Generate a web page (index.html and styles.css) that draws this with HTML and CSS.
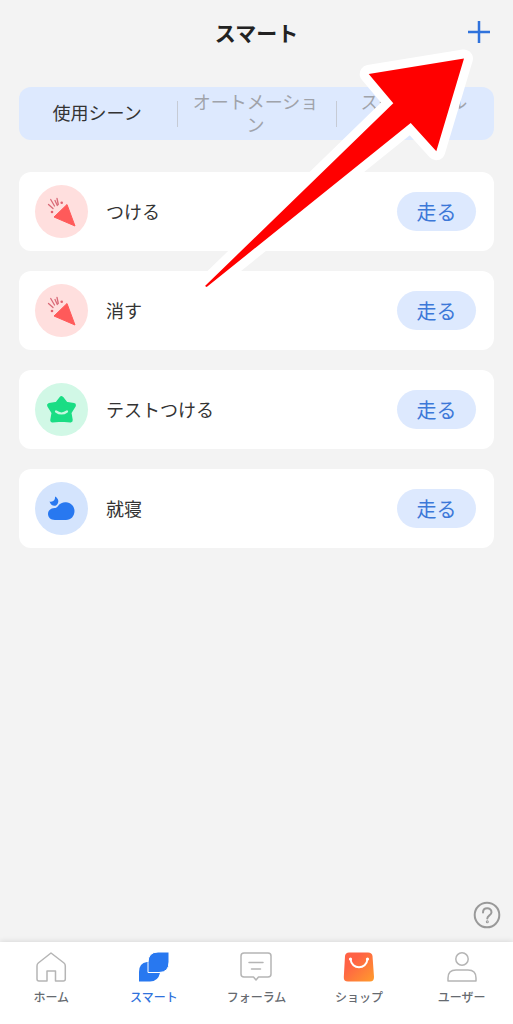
FILE: index.html
```
<!DOCTYPE html>
<html lang="ja">
<head>
<meta charset="utf-8">
<meta name="viewport" content="width=device-width, initial-scale=1">
<title>スマート</title>
<link rel="stylesheet" href="styles.css">
</head>
<body>
<svg class="defs" width="0" height="0" aria-hidden="true">
  <symbol id="party" viewBox="0 0 53 53">
    <path d="M32 19.500 40 41 19 32Z" fill="#ff5a5a" stroke="#ff5a5a" stroke-width="1" stroke-linejoin="round"/>
    <path d="M13.500 19.500 18 23.500M15.700 14.500 19.500 21M20 15.500 22.300 20.500M23.300 19.500 22 13.500" fill="none" stroke="#d96a78" stroke-width="1.300" stroke-linecap="round"/>
    <circle cx="17" cy="27" r="1.300" fill="#e2616d"/>
    <circle cx="26.700" cy="17.700" r="1.300" fill="#e2616d"/>
  </symbol>
</svg>

<header class="header">
  <h1 class="title">スマート</h1>
  <button class="add" type="button" aria-label="追加">
    <svg width="22" height="22" viewBox="0 0 22 22"><path d="M11 0V22M0 11H22" stroke="#2f72dc" stroke-width="2.500"/></svg>
  </button>
</header>

<main class="main">
  <div class="tabs">
    <button class="tab tab-active" type="button">使用シーン</button>
    <button class="tab" type="button">オートメーション</button>
    <button class="tab tab-top" type="button">スケジュール</button>
  </div>

  <ul class="scenes">
    <li class="scene">
      <span class="badge badge-red"><svg width="53" height="53"><use href="#party"/></svg></span>
      <span class="name">つける</span>
      <button class="run" type="button">走る</button>
    </li>
    <li class="scene">
      <span class="badge badge-red"><svg width="53" height="53"><use href="#party"/></svg></span>
      <span class="name">消す</span>
      <button class="run" type="button">走る</button>
    </li>
    <li class="scene">
      <span class="badge badge-green">
        <svg width="53" height="53" viewBox="0 0 53 53">
          <path d="M26.500 15.500 30.800 21 38.700 22.300 34.200 29.500 35.500 37.200 26.500 36.400 17.500 37.200 18.800 29.500 14.300 22.300 22.200 21Z" fill="#1add84" stroke="#1add84" stroke-width="4.500" stroke-linejoin="round"/>
          <path d="M21 28.500Q26.500 32.500 32 28.500" fill="none" stroke="#c5f8df" stroke-width="2.200" stroke-linecap="round"/>
        </svg>
      </span>
      <span class="name">テストつける</span>
      <button class="run" type="button">走る</button>
    </li>
    <li class="scene">
      <span class="badge badge-blue">
        <svg width="53" height="53" viewBox="0 0 53 53">
          <path d="M20 38C15.500 38 13 35 13 32C13 28.500 16 26 19.500 26C21 26 22 25.500 23 24C25 21 28.500 20 31 20.300C36 20.800 39.500 24.500 39.500 29C39.500 34 36 38 31 38Z" fill="#2878f0"/>
          <path d="M20 14.500C24 16.500 24.500 21 21 23.500C18.500 24.500 15.500 23 14.500 19.500C18 20.500 20.500 18 20 14.500Z" fill="#2878f0"/>
        </svg>
      </span>
      <span class="name">就寝</span>
      <button class="run" type="button">走る</button>
    </li>
  </ul>

  <button class="help" type="button" aria-label="ヘルプ">
    <svg width="28" height="28" viewBox="0 0 28 28" fill="none" stroke="#999" stroke-width="2" stroke-linecap="round">
      <circle cx="14" cy="14" r="12.300"/>
      <path d="M10 11.500C10 6 18.500 6 18.500 11.200C18.500 14.500 14.300 14.300 14.300 17.500"/>
      <circle cx="14.300" cy="20.800" r=".5"/>
    </svg>
  </button>
</main>

<nav class="nav">
  <a class="nav-item" href="#home">
    <svg width="32" height="32" viewBox="0 0 32 32" fill="none" stroke="#b5b5b5" stroke-width="1.500" stroke-linejoin="round"><path d="M16 2 29 12Q30.300 13 30.300 15V28Q30.300 30 28.300 30H20.500V20H12V30H4Q2 30 2 28V15Q2 13 3.300 12Z"/></svg>
    ホーム
  </a>
  <a class="nav-item nav-active" href="#smart" aria-current="page">
    <svg width="32" height="32" viewBox="0 0 32 32">
      <path d="M1 30.500V21Q1 12 9 11H15V22H22Q20 30.500 12 30.500Z" fill="#2878f0"/>
      <path d="M20 1H31V11Q31 21.500 21 21.500H10V11.500Q10 1 20 1Z" fill="#2878f0" stroke="#fff" stroke-width="1"/>
    </svg>
    スマート
  </a>
  <a class="nav-item" href="#forum">
    <svg width="32" height="32" viewBox="0 0 32 32" fill="none" stroke="#b5b5b5" stroke-width="1.500" stroke-linejoin="round" stroke-linecap="round"><path d="M4 2H28Q31 2 31 5V23Q31 26 28 26H18.500L16 29 13.500 26H4Q1 26 1 23V5Q1 2 4 2ZM9 11.500H23M11.500 18H20.500"/></svg>
    フォーラム
  </a>
  <a class="nav-item" href="#shop">
    <svg width="32" height="32" viewBox="0 0 32 32">
      <defs><linearGradient id="bag" x1="0.300" y1="0.300" x2="1" y2="1"><stop offset="0" stop-color="#ff6245"/><stop offset="1" stop-color="#ff9c2c"/></linearGradient></defs>
      <path d="M6 1.500H25Q29 1.500 29.500 5L31 26Q31 30.500 27 30.500H5Q.500 30.500 .800 26L2 5Q2.500 1.500 6 1.500Z" fill="url(#bag)"/>
      <path d="M7.500 8C8.500 19 23.500 19 24.500 8" fill="none" stroke="#fff" stroke-width="2"/>
      <circle cx="7.500" cy="8" r="1.600" fill="#fff"/><circle cx="24.500" cy="8" r="1.600" fill="#fff"/>
    </svg>
    ショップ
  </a>
  <a class="nav-item" href="#user">
    <svg width="32" height="32" viewBox="0 0 32 32" fill="none" stroke="#b5b5b5" stroke-width="1.500" stroke-linejoin="round"><circle cx="16" cy="8" r="6.200"/><path d="M2 30V27Q2 19 10 19H22Q30 19 30 27V30Z"/></svg>
    ユーザー
  </a>
</nav>

<svg class="arrow" width="290" height="260" viewBox="0 0 290 260" aria-hidden="true">
  <path d="M274 18.500 178.700 34 203.300 63.300 15 246 16.700 247 220.700 83 246.300 111.300Z" fill="#fff" stroke="#fff" stroke-width="18" stroke-linejoin="round"/>
  <path d="M274 18.500 178.700 34 203.300 63.300 15 246 16.700 247 220.700 83 246.300 111.300Z" fill="#f00"/>
</svg>
</body>
</html>
```
FILE: styles.css
```
* {
  box-sizing: border-box;
}

body {
  position: relative;
  display: flex;
  flex-direction: column;
  min-height: 100vh;
  margin: 0;
  background: #f3f3f3;
  color: #333;
  font-family: "Noto Sans CJK JP", sans-serif;
}

button {
  padding: 0;
  border: 0;
  background: none;
  color: inherit;
  font: inherit;
  cursor: pointer;
}

svg {
  display: block;
}

.defs {
  position: absolute;
}

.header {
  display: grid;
  grid-template-columns: 1fr auto 1fr;
  align-items: center;
  height: 63px;
  padding: 0 23px;
}

.title {
  grid-column: 2;
  margin: 0;
  color: #222;
  font-size: 21px;
  font-weight: 700;
  line-height: 30px;
}

.add {
  justify-self: end;
}

.main {
  display: flex;
  flex: 1;
  flex-direction: column;
  padding: 24px 19px 13px;
}

.tabs {
  display: grid;
  grid-template-columns: repeat(3, 1fr);
  height: 53px;
  border-radius: 12px;
  background: #dde9fe;
}

.tab {
  display: flex;
  align-items: center;
  justify-content: center;
  padding: 0 14px 2px 12px;
  color: #a0a3aa;
  font-size: 18px;
  line-height: 23px;
}

.tab + .tab {
  background: linear-gradient(#c6cbd5, #c6cbd5) left center / 1px 26px no-repeat;
}

.tab-active {
  color: #333;
}

.tab-top {
  align-items: flex-start;
  padding-top: 3px;
}

.scenes {
  display: flex;
  flex-direction: column;
  gap: 20px;
  margin: 32px 0 0;
  padding: 0;
  list-style: none;
}

.scene {
  display: flex;
  align-items: center;
  gap: 18px;
  height: 79px;
  padding: 0 18px 0 16px;
  border-radius: 12px;
  background: #fff;
}

.badge {
  border-radius: 50%;
}

.badge-red {
  background: #ffdfde;
}

.badge-green {
  background: #d1f8e6;
}

.badge-blue {
  background: #d4e4fd;
}

.name {
  flex: 1;
  padding-bottom: 2px;
  font-size: 18px;
  line-height: 26px;
}

.run {
  width: 79px;
  height: 39px;
  border-radius: 20px;
  background: #dde9fe;
  color: #3c78d8;
  font-size: 20px;
  line-height: 39px;
}

.help {
  align-self: flex-end;
  margin: auto -7px 0 0;
}

.nav {
  display: grid;
  grid-template-columns: repeat(5, 1fr);
  height: 82px;
  padding-top: 9px;
  background: #fff;
  box-shadow: 0 -1px 5px rgb(0 0 0 / 10%);
}

.nav-item {
  display: flex;
  flex-direction: column;
  align-items: center;
  gap: 5px;
  color: #666a70;
  font-size: 12px;
  font-weight: 500;
  line-height: 18px;
  text-decoration: none;
}

.nav-active {
  color: #2f72dc;
}

.arrow {
  position: absolute;
  top: 40px;
  right: 33px;
  pointer-events: none;
}
```
